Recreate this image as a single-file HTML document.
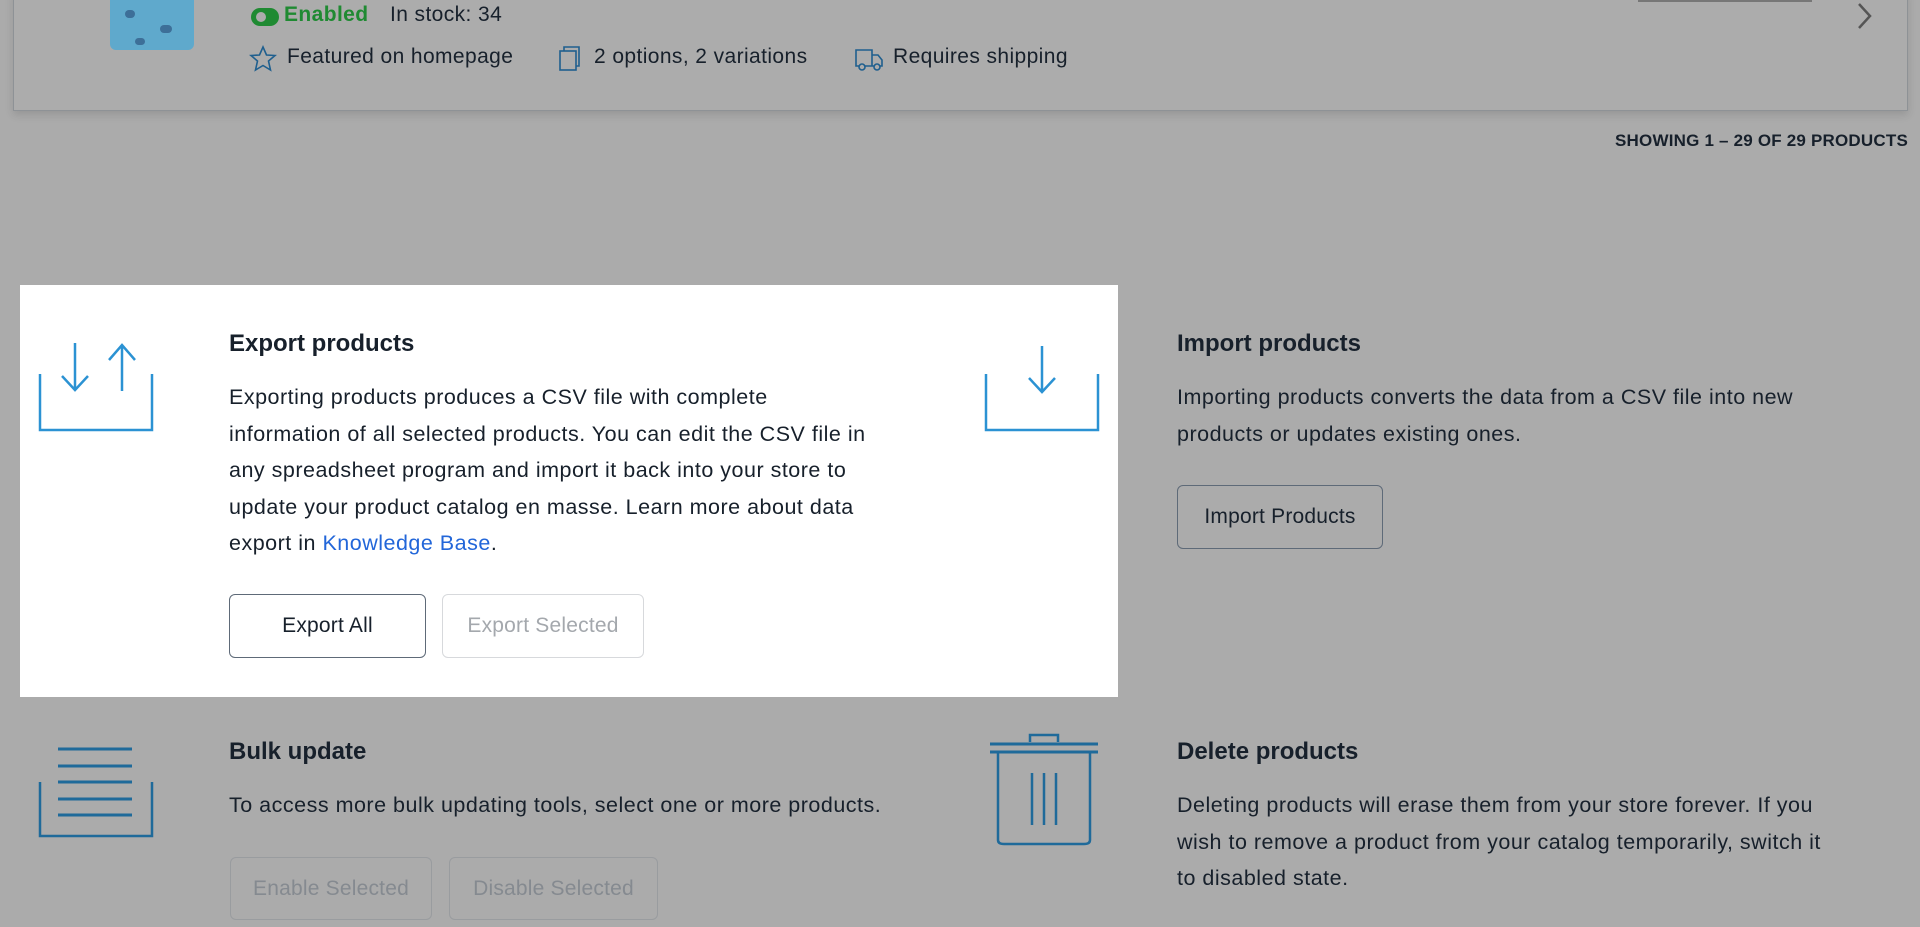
<!DOCTYPE html>
<html><head><meta charset="utf-8"><style>
*{margin:0;padding:0;box-sizing:border-box}
body{width:1920px;height:927px;background:#ababab;font-family:"Liberation Sans",sans-serif;color:#17202b;position:relative;overflow:hidden}
.a{position:absolute;white-space:nowrap}
.card{position:absolute;left:13px;top:-10px;width:1895px;height:121px;border:1px solid #8e9296;background:#acacac;box-shadow:0 4px 8px rgba(0,0,0,.12)}
.t{font-size:21.5px;line-height:36.5px;letter-spacing:.5px}
h3{position:absolute;font-size:24px;font-weight:bold;white-space:nowrap}
.btn{position:absolute;border:1px solid #5e6a78;border-radius:6px;font-size:21px;display:flex;align-items:center;justify-content:center;letter-spacing:.2px}
.top{font-size:21px;letter-spacing:.4px}
</style></head><body>
<div class="card"></div>
<div class="a" style="left:110px;top:0;width:84px;height:50px;background:#5fa9cc;border-radius:0 0 6px 6px"></div>
<div class="a" style="left:125px;top:10px;width:10px;height:8px;background:#3d6f98;border-radius:4px"></div>
<div class="a" style="left:160px;top:25px;width:12px;height:8px;background:#3d6f98;border-radius:4px"></div>
<div class="a" style="left:135px;top:38px;width:10px;height:7px;background:#3d6f98;border-radius:4px"></div>
<div class="a" style="left:1638px;top:0;width:174px;height:2px;background:#777"></div>
<svg class="a" style="left:1855px;top:2px" width="20" height="28"><path d="M4 2 L15 14 L4 26" stroke="#555" stroke-width="2.5" fill="none"/></svg>
<svg class="a" style="left:250px;top:7px" width="30" height="20"><rect x="1" y="1" width="28" height="18" rx="9" fill="#1f8a32"/><circle cx="11" cy="10" r="5" fill="#acacac"/></svg>
<div class="a top" style="left:284px;top:3px;font-weight:bold;color:#1f8a32">Enabled</div>
<div class="a top" style="left:390px;top:3px">In stock: 34</div>
<svg class="a" style="left:249px;top:45px" width="28" height="28"><path d="M14 2 L17.5 10 L26 10.5 L19.5 16 L21.5 25 L14 20.5 L6.5 25 L8.5 16 L2 10.5 L10.5 10 Z" fill="none" stroke="#1f5f8e" stroke-width="1.6"/></svg>
<div class="a top" style="left:287px;top:45px">Featured on homepage</div>
<svg class="a" style="left:558px;top:45px" width="24" height="28"><rect x="2" y="6" width="16" height="19" fill="none" stroke="#1f5f8e" stroke-width="1.6"/><path d="M6 6 V2 H21 V21 H18" fill="none" stroke="#1f5f8e" stroke-width="1.6"/></svg>
<div class="a top" style="left:594px;top:45px">2 options, 2 variations</div>
<svg class="a" style="left:854px;top:45px" width="30" height="28"><path d="M2 5 H18 V21 H2 Z M18 10 H24 L28 15 V21 H18" fill="none" stroke="#1f5f8e" stroke-width="1.6"/><circle cx="8" cy="22" r="3" fill="#acacac" stroke="#1f5f8e" stroke-width="1.6"/><circle cx="23" cy="22" r="3" fill="#acacac" stroke="#1f5f8e" stroke-width="1.6"/></svg>
<div class="a top" style="left:893px;top:45px">Requires shipping</div>
<div class="a" style="right:12px;top:131px;font-size:17px;font-weight:bold;letter-spacing:.2px">SHOWING 1 – 29 OF 29 PRODUCTS</div>

<div class="a" style="left:20px;top:285px;width:1098px;height:412px;background:#fff"></div>
<svg class="a" style="left:38px;top:340px" width="118" height="92"><path d="M2 34 V90 H114 V34" fill="none" stroke="#2b92d3" stroke-width="2.5"/><path d="M37 3 V50 M24 36 L37 50 L50 36" fill="none" stroke="#2b92d3" stroke-width="2.5"/><path d="M84 51 V5 M71 20 L84 5 L97 20" fill="none" stroke="#2b92d3" stroke-width="2.5"/></svg>
<h3 style="left:229px;top:330px">Export products</h3>
<div class="a t" style="left:229px;top:379px">Exporting products produces a CSV file with complete<br>information of all selected products. You can edit the CSV file in<br>any spreadsheet program and import it back into your store to<br>update your product catalog en masse. Learn more about data<br>export in <span style="color:#2266d9">Knowledge Base</span>.</div>
<div class="btn" style="left:229px;top:594px;width:197px;height:64px">Export All</div>
<div class="btn" style="left:442px;top:594px;width:202px;height:64px;border-color:#d7d9dc;color:#a4a8ad">Export Selected</div>

<svg class="a" style="left:984px;top:340px" width="118" height="92"><path d="M2 34 V90 H114 V34" fill="none" stroke="#2b92d3" stroke-width="2.5"/><path d="M58 6 V52 M45 38 L58 52 L71 38" fill="none" stroke="#2b92d3" stroke-width="2.5"/></svg>
<h3 style="left:1177px;top:330px">Import products</h3>
<div class="a t" style="left:1177px;top:379px">Importing products converts the data from a CSV file into new<br>products or updates existing ones.</div>
<div class="btn" style="left:1177px;top:485px;width:206px;height:64px">Import Products</div>

<svg class="a" style="left:38px;top:744px" width="118" height="96"><path d="M2 38 V92 H114 V38" fill="none" stroke="#1f6a9a" stroke-width="2.5"/><path d="M20 5 H94 M20 22 H94 M20 38 H94 M20 55 H94 M20 71 H94" stroke="#1f6a9a" stroke-width="3"/></svg>
<h3 style="left:229px;top:738px">Bulk update</h3>
<div class="a t" style="left:229px;top:787px">To access more bulk updating tools, select one or more products.</div>
<div class="btn" style="left:230px;top:857px;width:202px;height:63px;border-color:#999c9f;color:#858a90">Enable Selected</div>
<div class="btn" style="left:449px;top:857px;width:209px;height:63px;border-color:#999c9f;color:#858a90">Disable Selected</div>

<svg class="a" style="left:988px;top:730px" width="112" height="118"><path d="M42 12 V5 H70 V12" fill="none" stroke="#1f6a9a" stroke-width="2.5"/><path d="M2 14 H110 M2 22 H110" stroke="#1f6a9a" stroke-width="3"/><path d="M10 23 V110 Q10 114 16 114 H96 Q102 114 102 110 V23" fill="none" stroke="#1f6a9a" stroke-width="2.5"/><path d="M44 43 V95 M56 43 V95 M68 43 V95" stroke="#1f6a9a" stroke-width="2.5"/></svg>
<h3 style="left:1177px;top:738px">Delete products</h3>
<div class="a t" style="left:1177px;top:787px">Deleting products will erase them from your store forever. If you<br>wish to remove a product from your catalog temporarily, switch it<br>to disabled state.</div>
</body></html>
